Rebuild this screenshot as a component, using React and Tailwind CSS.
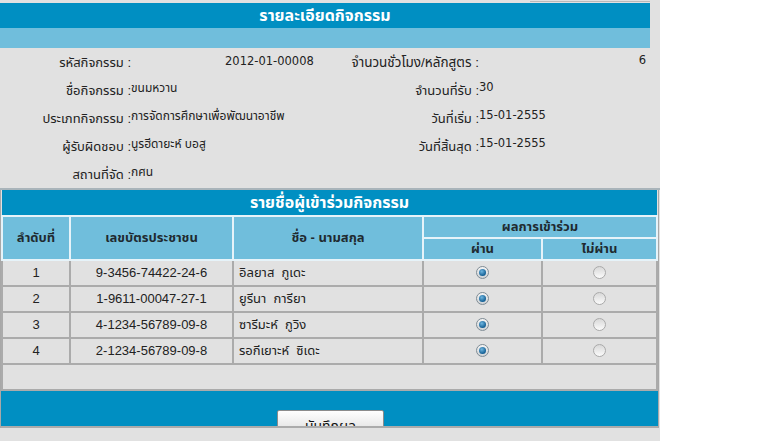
import React from "react";

const rows = [
  { no: "1", id: "9-3456-74422-24-6", name: "อิลยาส  กูเดะ" },
  { no: "2", id: "1-9611-00047-27-1", name: "ยูรีนา  การียา" },
  { no: "3", id: "4-1234-56789-09-8", name: "ซารีมะห์  กูวิง" },
  { no: "4", id: "2-1234-56789-09-8", name: "รอกีเยาะห์  ซิเดะ" },
];

function Radio({ on }) {
  if (on) {
    return (
      <span className="flex h-[13px] w-[13px] items-center justify-center rounded-full border border-[#7f8c95] bg-gradient-to-b from-[#f4f4f4] to-[#cfd3d6]">
        <span className="h-[7px] w-[7px] rounded-full bg-[radial-gradient(circle_at_40%_35%,#6fb6e0,#135f94_70%)]" />
      </span>
    );
  }
  return (
    <span className="block h-[13px] w-[13px] rounded-full border border-[#a9a9a9] bg-gradient-to-b from-[#d8d8d8] to-[#fbfbfb]" />
  );
}

const font = { fontFamily: 'Tahoma, "Liberation Sans", "Noto Sans Thai", "Noto Sans", sans-serif' };
const arial = { fontFamily: '"Liberation Sans", Arial, "Noto Sans Thai", sans-serif' };
const num = { fontFamily: '"DejaVu Sans", Verdana, sans-serif' };

export default function App() {
  return (
    <div className="flex h-[441px] w-[768px] overflow-hidden bg-white text-[#222]" style={font}>
      <div className="flex w-[660px] flex-col bg-[#e1e1e1]">
        {/* top strip */}
        <div className="flex h-[3px] w-[650px] justify-end">
          <div className="mt-[1px] h-[1px] w-[120px] bg-[#b9b9b9]" />
        </div>
        {/* header bars */}
        <div className="w-[650px]">
          <div className="flex h-[25px] items-center justify-center bg-[#008fc2] text-[16px] font-bold text-white">
            รายละเอียดกิจกรรม
          </div>
          <div className="h-[20px] bg-[#70bedc]" />
        </div>
        {/* info */}
        <div className="grid h-[140px] w-[650px] grid-cols-[131px_214px_134px_1fr] grid-rows-[repeat(5,28px)] text-[13px]">
          <div className="flex items-center justify-end pt-[2px]">รหัสกิจกรรม :</div>
          <div className="flex items-start pl-[94px] pt-[5px] text-[11.5px]" style={num}>2012-01-00008</div>
          <div className="flex items-center justify-end whitespace-nowrap pt-[2px] text-[13.5px]">จำนวนชั่วโมง/หลักสูตร :</div>
          <div className="flex items-start justify-end pr-[4px] pt-[4px] text-[11.5px]" style={num}>6</div>

          <div className="flex items-center justify-end pt-[2px]">ชื่อกิจกรรม :</div>
          <div className="pt-[3px] text-[12px]">ขนมหวาน</div>
          <div className="flex items-center justify-end pt-[2px]">จำนวนที่รับ :</div>
          <div className="pt-[3px] text-[11.5px]" style={num}>30</div>

          <div className="flex items-center justify-end pt-[2px]">ประเภทกิจกรรม :</div>
          <div className="whitespace-nowrap pt-[3px] text-[12px]">การจัดการศึกษาเพื่อพัฒนาอาชีพ</div>
          <div className="flex items-center justify-end pt-[2px]">วันที่เริ่ม :</div>
          <div className="pt-[3px] text-[11.5px]" style={num}>15-01-2555</div>

          <div className="flex items-center justify-end pt-[2px]">ผู้รับผิดชอบ :</div>
          <div className="pt-[3px] text-[12px]">นูรฮีดายะห์ บอสู</div>
          <div className="flex items-center justify-end pt-[2px]">วันที่สิ้นสุด :</div>
          <div className="pt-[3px] text-[11.5px]" style={num}>15-01-2555</div>

          <div className="flex items-center justify-end pt-[2px]">สถานที่จัด :</div>
          <div className="pt-[3px] text-[12px]">กศน</div>
          <div />
          <div />
        </div>
        {/* participants */}
        <div className="h-[2px] w-[660px] bg-[#a9b4ba]" />
        <div className="w-[659px] border-l border-r border-[#a8a8a8]">
          <table className="w-full border-collapse text-[13px]" style={arial}>
            <colgroup>
              <col className="w-[68px]" />
              <col className="w-[163px]" />
              <col className="w-[190px]" />
              <col className="w-[119px]" />
              <col />
            </colgroup>
            <thead>
              <tr className="h-[26px] bg-[#008fc2]">
                <th colSpan={5} className="text-center text-[16px] font-bold text-white" style={font}>
                  รายชื่อผู้เข้าร่วมกิจกรรม
                </th>
              </tr>
              <tr className="h-[21px] bg-[#70bedc] font-bold text-[#1f2a30]" style={font}>
                <th rowSpan={2} className="border-2 border-[#e6f3f9]">ลำดับที่</th>
                <th rowSpan={2} className="border-2 border-[#e6f3f9]">เลขบัตรประชาชน</th>
                <th rowSpan={2} className="border-2 border-[#e6f3f9]">ชื่อ - นามสกุล</th>
                <th colSpan={2} className="border-2 border-[#e6f3f9]">ผลการเข้าร่วม</th>
              </tr>
              <tr className="h-[22px] bg-[#70bedc] font-bold text-[#1f2a30]" style={font}>
                <th className="border-2 border-[#e6f3f9]">ผ่าน</th>
                <th className="border-2 border-[#e6f3f9]">ไม่ผ่าน</th>
              </tr>
            </thead>
            <tbody>
              {rows.map((r) => (
                <tr key={r.no} className="h-[26px]">
                  <td className="border-2 border-[#ababab] text-center">{r.no}</td>
                  <td className="border-2 border-[#ababab] text-center">{r.id}</td>
                  <td className="whitespace-pre border-2 border-[#ababab] pl-[5px] text-left">{r.name}</td>
                  <td className="border-2 border-[#ababab]">
                    <div className="flex items-center justify-center">
                      <Radio on />
                    </div>
                  </td>
                  <td className="border-2 border-[#ababab]">
                    <div className="flex items-center justify-center">
                      <Radio />
                    </div>
                  </td>
                </tr>
              ))}
              <tr className="h-[26px]">
                <td colSpan={5} className="border-2 border-[#ababab]" />
              </tr>
            </tbody>
          </table>
          <div className="relative h-[37px] overflow-hidden border-b-2 border-[#ababab] bg-[#008fc2]">
            <button
              className="absolute left-[276px] top-[19px] flex h-[30px] w-[107px] items-start justify-center rounded-[2px] border border-[#8c8c8c] bg-gradient-to-b from-[#ffffff] to-[#d6d6d6] pt-[5px] text-[14px] text-[#111]"
              style={font}
            >
              บันทึกผล
            </button>
          </div>
        </div>
      </div>
      <div className="flex-1 bg-white" />
    </div>
  );
}
